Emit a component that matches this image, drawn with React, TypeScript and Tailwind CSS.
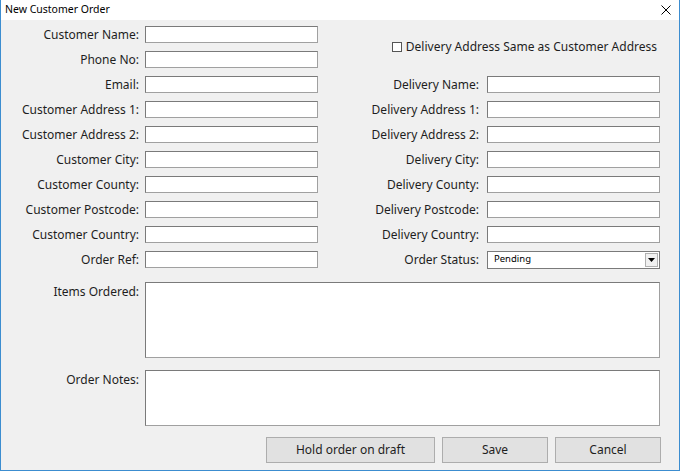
const font = { fontFamily: '"Noto Sans", "Open Sans", sans-serif' };

const left = [
  "Customer Name:",
  "Phone No:",
  "Email:",
  "Customer Address 1:",
  "Customer Address 2:",
  "Customer City:",
  "Customer County:",
  "Customer Postcode:",
  "Customer Country:",
  "Order Ref:",
];

const right = [
  null,
  null,
  "Delivery Name:",
  "Delivery Address 1:",
  "Delivery Address 2:",
  "Delivery City:",
  "Delivery County:",
  "Delivery Postcode:",
  "Delivery Country:",
];

function Field() {
  return <div className="h-[17px] bg-white border border-[#a0a0a0] border-t-[#7a7a7a] border-l-[#7a7a7a]" />;
}

function Label({ text, r }: { text: string; r?: boolean }) {
  return (
    <div className={`text-right text-[12px] text-[#1e1e1e] leading-none whitespace-nowrap ${r ? "pr-[3px]" : "pr-[1px]"}`}>
      {text}
    </div>
  );
}

export default function App() {
  return (
    <div className="w-[680px] h-[471px] bg-[#f0f0f0] border-x border-b border-[#3c8dd0] flex flex-col" style={font}>
      <div className="h-[20px] bg-white flex items-center justify-between pl-[4px] pr-[8px] shrink-0">
        <span className="text-[10.5px] text-black">New Customer Order</span>
        <svg width="10" height="10" viewBox="0 0 10 10"><path d="M0.5 0.5l9 9M9.5 0.5l-9 9" stroke="#000" strokeWidth="1" /></svg>
      </div>
      <div className="grid grid-cols-[139px_173px_159px_173px] gap-x-[5px] auto-rows-[25px] items-center pt-[2px]">
        {left.map((l, i) => {
          const r = right[i];
          return (
            <div key={l} className="contents">
              <Label text={l} />
              <Field />
              {i === 0 && (
                <div className="col-span-2 row-span-2 flex items-center justify-end gap-[4px] pr-[3px] text-[12px] text-[#1e1e1e]">
                  <span className="w-[10px] h-[10px] bg-white border border-[#555]" />
                  Delivery Address Same as Customer Address
                </div>
              )}
              {i >= 2 && i <= 8 && r && (
                <>
                  <Label text={r} r />
                  <Field />
                </>
              )}
              {i === 9 && (
                <>
                  <Label text="Order Status:" r />
                  <div className="h-[18px] bg-white border border-[#7a7a7a] flex items-center justify-between pl-[6px] pr-[1px]">
                    <span className="text-[9.5px] text-black">Pending</span>
                    <span className="w-[13px] h-[14px] bg-[#f0f0f0] border border-[#b0b0b0] flex items-center justify-center">
                      <svg width="7" height="4" viewBox="0 0 7 4"><path d="M0 0h7L3.5 4z" fill="#000" /></svg>
                    </span>
                  </div>
                </>
              )}
            </div>
          );
        })}
      </div>
      <div className="grid grid-cols-[139px_515px] gap-x-[5px] gap-y-[12px] mt-[10px]">
        <div className="pt-[4px]"><Label text="Items Ordered:" /></div>
        <div className="h-[76px] bg-white border border-[#a0a0a0] border-t-[#7a7a7a] border-l-[#7a7a7a]" />
        <div className="pt-[4px]"><Label text="Order Notes:" /></div>
        <div className="h-[56px] bg-white border border-[#a0a0a0] border-t-[#7a7a7a] border-l-[#7a7a7a]" />
      </div>
      <div className="flex justify-end gap-[7px] pr-[18px] mt-[11px]">
        {[["Hold order on draft", "w-[169px]"], ["Save", "w-[106px]"], ["Cancel", "w-[106px]"]].map(([t, w]) => (
          <button key={t} className={`${w} h-[26px] bg-[#e1e1e1] border border-[#adadad] text-[12px] text-[#1e1e1e]`}>
            {t}
          </button>
        ))}
      </div>
    </div>
  );
}
